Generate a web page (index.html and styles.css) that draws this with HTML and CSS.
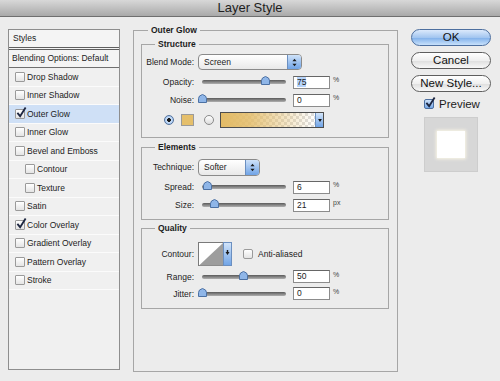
FILE: index.html
```html
<!DOCTYPE html>
<html lang="en">
<head>
    <meta charset="UTF-8">
    <meta name="viewport" content="width=device-width, initial-scale=1.0">
    <title>Layer Style</title>
    <link rel="stylesheet" href="styles.css">
</head>
<body>
    <div class="titlebar">Layer Style</div>
    <div class="dialog">
        <!-- style list -->
        <div class="styles">
            <div class="styles-head">Styles</div>
            <div class="styles-blend">Blending Options: Default</div>
            <div class="item"><span class="cb"></span>Drop Shadow</div>
            <div class="item"><span class="cb"></span>Inner Shadow</div>
            <div class="item active"><span class="cb"><svg class="tick" viewBox="0 0 12 12"><path d="M1.5 6.5 L4.5 10 L10.5 0.5" /></svg></span>Outer Glow</div>
            <div class="item"><span class="cb"></span>Inner Glow</div>
            <div class="item"><span class="cb"></span>Bevel and Emboss</div>
            <div class="item sub"><span class="cb"></span>Contour</div>
            <div class="item sub"><span class="cb"></span>Texture</div>
            <div class="item"><span class="cb"></span>Satin</div>
            <div class="item"><span class="cb"><svg class="tick" viewBox="0 0 12 12"><path d="M1.5 6.5 L4.5 10 L10.5 0.5" /></svg></span>Color Overlay</div>
            <div class="item"><span class="cb"></span>Gradient Overlay</div>
            <div class="item"><span class="cb"></span>Pattern Overlay</div>
            <div class="item"><span class="cb"></span>Stroke</div>
        </div>

        <!-- settings -->
        <fieldset class="panel">
            <legend>Outer Glow</legend>

            <fieldset class="group structure">
                <legend>Structure</legend>
                <div class="row">
                    <span class="lbl">Blend Mode:</span>
                    <div class="select wide"><span>Screen</span><span class="step"><svg viewBox="0 0 6 10"><path d="M3 0.5 L5.5 3.5 H0.5 Z M3 9.5 L5.5 6.5 H0.5 Z" /></svg></span></div>
                </div>
                <div class="row gap">
                    <span class="lbl">Opacity:</span>
                    <div class="slider"><div class="track"></div><svg class="thumb" style="left:63px" viewBox="0 0 9 9"><path d="M0.5 8.5 V4.5 Q0.5 1.5 4.5 0.5 Q8.5 1.5 8.5 4.5 V8.5 Z" /></svg></div>
                    <div class="field"><span class="sel">75</span></div>
                    <span class="unit">%</span>
                </div>
                <div class="row">
                    <span class="lbl">Noise:</span>
                    <div class="slider"><div class="track"></div><svg class="thumb" style="left:0px" viewBox="0 0 9 9"><path d="M0.5 8.5 V4.5 Q0.5 1.5 4.5 0.5 Q8.5 1.5 8.5 4.5 V8.5 Z" /></svg></div>
                    <div class="field">0</div>
                    <span class="unit">%</span>
                </div>
                <div class="row gap color-row">
                    <span class="radio on"></span>
                    <span class="swatch"></span>
                    <span class="radio second"></span>
                    <div class="gradient"><span class="grad-fill"></span><span class="grad-arrow"><svg viewBox="0 0 5 4"><path d="M0 0 H5 L2.5 4 Z" /></svg></span></div>
                </div>
            </fieldset>

            <fieldset class="group elements">
                <legend>Elements</legend>
                <div class="row">
                    <span class="lbl">Technique:</span>
                    <div class="select narrow"><span>Softer</span><span class="step"><svg viewBox="0 0 6 10"><path d="M3 0.5 L5.5 3.5 H0.5 Z M3 9.5 L5.5 6.5 H0.5 Z" /></svg></span></div>
                </div>
                <div class="row gap">
                    <span class="lbl">Spread:</span>
                    <div class="slider"><div class="track"></div><svg class="thumb" style="left:5px" viewBox="0 0 9 9"><path d="M0.5 8.5 V4.5 Q0.5 1.5 4.5 0.5 Q8.5 1.5 8.5 4.5 V8.5 Z" /></svg></div>
                    <div class="field">6</div>
                    <span class="unit">%</span>
                </div>
                <div class="row">
                    <span class="lbl">Size:</span>
                    <div class="slider"><div class="track"></div><svg class="thumb" style="left:12px" viewBox="0 0 9 9"><path d="M0.5 8.5 V4.5 Q0.5 1.5 4.5 0.5 Q8.5 1.5 8.5 4.5 V8.5 Z" /></svg></div>
                    <div class="field">21</div>
                    <span class="unit">px</span>
                </div>
            </fieldset>

            <fieldset class="group quality">
                <legend>Quality</legend>
                <div class="row contour-row">
                    <span class="lbl">Contour:</span>
                    <svg class="contour" viewBox="0 0 34 24">
                        <rect x="0.5" y="0.5" width="33" height="23" fill="#fff" stroke="#7a7a7a" />
                        <path d="M1 23.5 L25 1 V23.5 Z" fill="#9d9d9d" />
                        <rect x="25.5" y="0.5" width="8" height="23" fill="url(#cg)" stroke="#6b8fc0" />
                        <path d="M27.5 10 H31.5 L29.5 13 Z M28.8 8 H30.2 V10 H28.8 Z" fill="#1a1a1a" />
                        <defs><linearGradient id="cg" x1="0" y1="0" x2="0" y2="1"><stop offset="0" stop-color="#d3e5fa" /><stop offset="1" stop-color="#6fa3e6" /></linearGradient></defs>
                    </svg>
                    <span class="cb big"></span>
                    <span class="cb-text">Anti-aliased</span>
                </div>
                <div class="row short gap">
                    <span class="lbl">Range:</span>
                    <div class="slider"><div class="track"></div><svg class="thumb" style="left:41px" viewBox="0 0 9 9"><path d="M0.5 8.5 V4.5 Q0.5 1.5 4.5 0.5 Q8.5 1.5 8.5 4.5 V8.5 Z" /></svg></div>
                    <div class="field">50</div>
                    <span class="unit">%</span>
                </div>
                <div class="row short">
                    <span class="lbl">Jitter:</span>
                    <div class="slider"><div class="track"></div><svg class="thumb" style="left:0px" viewBox="0 0 9 9"><path d="M0.5 8.5 V4.5 Q0.5 1.5 4.5 0.5 Q8.5 1.5 8.5 4.5 V8.5 Z" /></svg></div>
                    <div class="field">0</div>
                    <span class="unit">%</span>
                </div>
            </fieldset>
        </fieldset>

        <!-- buttons -->
        <div class="side">
            <button class="btn ok">OK</button>
            <button class="btn">Cancel</button>
            <button class="btn">New Style...</button>
            <div class="preview-check">
                <span class="pcb"><svg class="tick" viewBox="0 0 12 12"><path d="M1.5 6.5 L4.5 10 L10.5 0.5" /></svg></span>
                Preview
            </div>
            <div class="preview-box"><div class="preview-square"></div></div>
        </div>
    </div>
</body>
</html>
```

FILE: styles.css
```css
body {
    margin: 0;
    background: #ececec;
    font-family: "Liberation Sans", Arial, sans-serif;
    font-size: 8.5px;
    color: #1c1c1c;
}
.titlebar {
    height: 16px;
    line-height: 16px;
    text-align: center;
    font-size: 13px;
    color: #1e1e1e;
    background: linear-gradient(#d8d8d8, #a9a9a9);
    border-bottom: 1px solid #6f6f6f;
}
.dialog {
    display: flex;
    align-items: flex-start;
    padding: 7px 0 0 8px;
}

/* style list */
.styles {
    width: 112px;
    height: 341px;
    margin-top: 5px;
    box-sizing: border-box;
    border: 1px solid #8e8e8e;
    background: #f0f0f0;
}
.styles-head {
    height: 17px;
    line-height: 17px;
    padding-left: 4px;
    background: #f4f4f4;
    border-bottom: 3px double #5f5f5f;
}
.styles-blend {
    height: 17px;
    line-height: 17px;
    padding-left: 3px;
    background: #f4f4f4;
    border-bottom: 1px solid #6f6f6f;
}
.item {
    height: 18.5px;
    box-sizing: border-box;
    display: flex;
    align-items: center;
    padding-left: 6px;
    border-bottom: 1px solid #fbfbfb;
}
.item.sub {
    padding-left: 16px;
}
.item.active {
    background: #cfe0f6;
}
.cb {
    position: relative;
    width: 8px;
    height: 8px;
    margin-right: 2px;
    border: 1px solid #9a9a9a;
    border-radius: 1px;
    background: linear-gradient(#ffffff, #e4e4e4);
    flex-shrink: 0;
}
.tick {
    position: absolute;
    left: 0;
    top: -3px;
    width: 11px;
    height: 11px;
    overflow: visible;
}
.tick path {
    fill: none;
    stroke: #1d2640;
    stroke-width: 2;
}

/* fieldsets */
.panel {
    margin: 0 0 0 13px;
    width: 265px;
    height: 348px;
    box-sizing: border-box;
    border: 1px solid #a6a6a6;
    padding: 2px 8px 0 7px;
    min-width: 0;
}
legend {
    font-weight: bold;
    line-height: 12px;
    padding: 0 3px;
}
.panel > legend {
    margin-left: 7px;
}
.group {
    margin: 0;
    border: 1px solid #a6a6a6;
    padding: 0;
    min-width: 0;
}
.group legend {
    margin-left: 13px;
}
.structure {
    padding: 3px 0 8px;
}
.elements {
    margin-top: 3px;
    padding: 5px 0 5px;
}
.quality {
    margin-top: 2px;
    padding: 8px 0 6px;
}
.row {
    display: flex;
    align-items: center;
    height: 18px;
}
.row.gap {
    margin-top: 2px;
}
.row.short {
    height: 17px;
}
.lbl {
    width: 52px;
    margin-right: 4px;
    text-align: right;
    flex-shrink: 0;
}

/* popup menus */
.select {
    display: flex;
    align-items: center;
    height: 16px;
    box-sizing: border-box;
    padding-left: 5px;
    border: 1px solid #8a8a8a;
    border-radius: 4px;
    background: linear-gradient(#ffffff, #e9e9e9);
    overflow: hidden;
}
.select.wide {
    width: 104px;
}
.select.narrow {
    width: 62px;
    height: 17px;
}
.step {
    margin-left: auto;
    align-self: stretch;
    width: 13px;
    display: flex;
    align-items: center;
    justify-content: center;
    border-left: 1px solid #6b8fc0;
    background: linear-gradient(#cfe2f9, #6fa3e6);
}
.step svg {
    width: 5px;
    height: 9px;
}
.step path {
    fill: #1a1a1a;
}

/* sliders */
.slider {
    position: relative;
    width: 92px;
    height: 18px;
    flex-shrink: 0;
}
.track {
    margin: 7px 4px 0;
    height: 4px;
    border-radius: 2px;
    background: linear-gradient(#5a5a5a, #b0b0b0);
}
.thumb {
    position: absolute;
    top: 3px;
    width: 9px;
    height: 9px;
}
.thumb path {
    fill: #8fb6e8;
    stroke: #4c71a3;
    stroke-width: 1;
}
.field {
    width: 37px;
    height: 13px;
    margin-left: 3px;
    box-sizing: border-box;
    padding-left: 3px;
    line-height: 11px;
    border: 1px solid #8c8c8c;
    border-top-color: #666666;
    background: #ffffff;
    flex-shrink: 0;
}
.sel {
    background: #b6d4fb;
}
.unit {
    align-self: flex-start;
    margin: 3px 0 0 3px;
    font-size: 7px;
    color: #444;
}

/* colour row */
.color-row {
    padding-left: 22px;
}
.radio {
    width: 10px;
    height: 10px;
    box-sizing: border-box;
    border: 1px solid #8a8a8a;
    border-radius: 50%;
    background: linear-gradient(#ffffff, #dcdcdc);
    flex-shrink: 0;
}
.radio.on {
    border-color: #56739c;
    background: radial-gradient(circle, #1a1a1a 0 1.6px, #cfe2f9 2.2px, #7eaee9 100%);
}
.radio.second {
    margin-left: 10px;
}
.swatch {
    width: 13px;
    height: 12px;
    margin-left: 7px;
    box-sizing: border-box;
    border: 1px solid #9a9a9a;
    background: #e5bf6b;
}
.gradient {
    display: flex;
    height: 16px;
    margin-left: 6px;
    box-sizing: border-box;
    border: 1px solid #4d4d4d;
}
.grad-fill {
    width: 94px;
    background:
        linear-gradient(to right, #e3bb66, rgba(227, 187, 102, 0.85) 30%, rgba(227, 187, 102, 0)),
        repeating-conic-gradient(#ffffff 0 25%, #dedede 0 50%) 0 0 / 6px 6px;
}
.grad-arrow {
    width: 7px;
    display: flex;
    align-items: center;
    justify-content: center;
    border-left: 1px solid #6b8fc0;
    background: linear-gradient(#d3e5fa, #6fa3e6);
}
.grad-arrow svg {
    width: 4px;
    height: 3px;
}
.grad-arrow path {
    fill: #111;
}

/* quality */
.contour-row {
    height: 24px;
}
.contour {
    width: 34px;
    height: 24px;
    flex-shrink: 0;
}
.cb.big {
    margin-left: 11px;
    margin-right: 5px;
    border-radius: 2px;
}

/* right column */
.side {
    width: 80px;
    margin: 5px 0 0 13px;
    display: flex;
    flex-direction: column;
}
.btn {
    height: 17px;
    margin: 0 0 6px;
    padding: 0;
    border: 1px solid #5e5e5e;
    border-radius: 9px;
    font-family: "Liberation Sans", Arial, sans-serif;
    font-size: 11.5px;
    line-height: 15px;
    color: #111;
    background: linear-gradient(#ffffff, #efefef 50%, #dedede 52%, #f8f8f8);
}
.btn.ok {
    border-color: #4d6f9f;
    background: linear-gradient(#dbe9fb, #a3c6f0 50%, #80b0ea 52%, #c8e1fb);
}
.preview-check {
    display: flex;
    align-items: center;
    height: 11px;
    margin-left: 13px;
    font-size: 11.5px;
}
.pcb {
    position: relative;
    width: 10px;
    height: 10px;
    margin-right: 5px;
    box-sizing: border-box;
    border: 1px solid #4d6f9f;
    border-radius: 2px;
    background: linear-gradient(#cfe2f9, #77a9e8);
}
.pcb .tick {
    left: 0;
    top: -3px;
}
.preview-box {
    width: 54px;
    height: 55px;
    margin: 8px 0 0 13px;
    box-sizing: border-box;
    border: 1px solid #cdcdcd;
    background: #d7d7d7;
    display: flex;
    align-items: center;
    justify-content: center;
}
.preview-square {
    width: 28px;
    height: 27px;
    background: #ffffff;
    box-shadow: 0 0 3px 1px #fbf7e6;
}
```
